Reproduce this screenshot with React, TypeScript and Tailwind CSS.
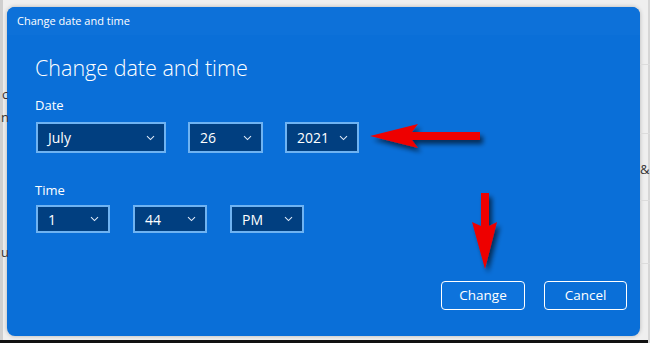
import React from "react";

const Chevron = () => (
  <svg width="9" height="6" viewBox="0 0 9 6" className="shrink-0">
    <path d="M1 1.2 L4.5 4.6 L8 1.2" fill="none" stroke="#dfe9f7" strokeWidth="1.1" />
  </svg>
);

function Select({ label, w, h }: { label: string; w: string; h: string }) {
  return (
    <div
      className={`${w} ${h} flex items-center justify-between border-2 border-[#6fb3f2] bg-[#013f80] pl-[10px] pr-[9px] text-[14px] text-white`}
    >
      <span>{label}</span>
      <Chevron />
    </div>
  );
}

export default function App() {
  return (
    <div
      className="relative h-[343px] w-[650px] overflow-hidden bg-[#efefef] pl-[7px] pt-[7px]"
      style={{ fontFamily: '"Open Sans", "Noto Sans", sans-serif' }}
    >
      {/* background fragments */}
      <div className="absolute left-0 top-0 h-full w-[3px] bg-[#cfcfcf]" />
      <div className="absolute bottom-0 left-0 h-[3px] w-full bg-[#111]" />
      <div className="absolute right-0 top-0 h-full w-[2px] bg-[#d6d6d6]" />
      <span className="absolute left-[2px] top-[85px] text-[13px] text-[#333]">c</span>
      <span className="absolute left-[1px] top-[108px] text-[13px] text-[#333]">n</span>
      <span className="absolute left-[1px] top-[243px] text-[13px] text-[#333]">u</span>
      <span className="absolute left-[640px] top-[160px] text-[13px] text-[#333]">&amp;</span>
      <div className="absolute left-[640px] top-[64px] h-px w-[10px] bg-[#dcdcdc]" />
      <div className="absolute left-[640px] top-[133px] h-px w-[10px] bg-[#dcdcdc]" />
      <div className="absolute left-[640px] top-[200px] h-px w-[10px] bg-[#dcdcdc]" />
      <div className="absolute left-[640px] top-[263px] h-px w-[10px] bg-[#dcdcdc]" />

      {/* dialog */}
      <div className="flex h-[329px] w-[633px] flex-col overflow-hidden rounded-[8px] bg-[#0a6fd8] shadow-[0_0_4px_rgba(0,0,0,0.25)]">
        <div className="flex h-[28px] items-center bg-[#0d71d9] pl-[10px] text-[11px] text-white">
          Change date and time
        </div>
        <div className="flex flex-1 flex-col pl-[28px] pr-[13px]">
          <div className="mt-[19px] text-[21.5px] font-light leading-[28px] text-white">
            Change date and time
          </div>
          <div className="mt-[14px] text-[13px] leading-[18px] text-white">Date</div>
          <div className="mt-[8px] flex gap-[22px] pl-px">
            <Select label="July" w="w-[130px]" h="h-[31px]" />
            <Select label="26" w="w-[75px]" h="h-[31px]" />
            <Select label="2021" w="w-[74px]" h="h-[31px]" />
          </div>
          <div className="mt-[28px] text-[13px] leading-[18px] text-white">Time</div>
          <div className="mt-[6px] flex gap-[23px] pl-px">
            <Select label="1" w="w-[74px]" h="h-[28px]" />
            <Select label="44" w="w-[74px]" h="h-[28px]" />
            <Select label="PM" w="w-[74px]" h="h-[28px]" />
          </div>
          <div className="mt-auto mb-[26px] flex justify-end gap-[19px]">
            <button className="h-[29px] w-[84px] rounded-[4px] border-[1.5px] border-white bg-[#0d73dc] text-[13.5px] text-white">
              Change
            </button>
            <button className="h-[29px] w-[83px] rounded-[4px] border-[1.5px] border-white bg-[#0a6fd8] text-[13.5px] text-white">
              Cancel
            </button>
          </div>
        </div>
      </div>

      {/* red arrows */}
      <svg className="absolute left-0 top-0" width="650" height="343" viewBox="0 0 650 343">
        <defs>
          <filter id="sh" x="-30%" y="-30%" width="160%" height="160%">
            <feGaussianBlur in="SourceAlpha" stdDeviation="2.5" />
            <feOffset dx="3" dy="4" result="b" />
            <feComponentTransfer>
              <feFuncA type="linear" slope="0.6" />
            </feComponentTransfer>
            <feMerge>
              <feMergeNode />
              <feMergeNode in="SourceGraphic" />
            </feMerge>
          </filter>
        </defs>
        <g filter="url(#sh)" fill="#ee0000">
          <path d="M370 136 L418 124 L412 132 L480 132 L480 140 L412 140 L418 148 Z" />
          <path d="M481 193 L489 193 L489 226 L497 222 L485 269 L472 222 L481 226 Z" />
        </g>
      </svg>
    </div>
  );
}
